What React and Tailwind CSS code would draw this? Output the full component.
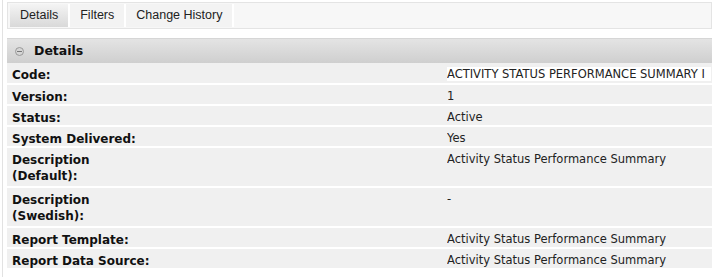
const rows = [
  { label: "Code:", value: "ACTIVITY STATUS PERFORMANCE SUMMARY I", code: true },
  { label: "Version:", value: "1" },
  { label: "Status:", value: "Active" },
  { label: "System Delivered:", value: "Yes" },
  { label: ["Description", "(Default):"], value: "Activity Status Performance Summary" },
  { label: ["Description", "(Swedish):"], value: "-" },
  { label: "Report Template:", value: "Activity Status Performance Summary" },
  { label: "Report Data Source:", value: "Activity Status Performance Summary" },
];

function Tab({ children, active }) {
  return (
    <div
      className={
        "flex items-center px-[10px] h-full border-r-2 border-white text-[12.5px] text-[#222] " +
        (active
          ? "bg-gradient-to-b from-[#f4f4f4] to-[#d9d9d9]"
          : "bg-[#f3f3f3]")
      }
    >
      {children}
    </div>
  );
}

export default function App() {
  return (
    <div className="w-[712px] h-[277px] overflow-hidden bg-white flex">
      <div className="w-[3px] ml-[2px] border-l border-[#e2e2e2] shrink-0" />
      <div className="flex-1 pl-[2px] pt-[2px]">
        {/* tabs */}
        <div
          className="h-[27px] flex bg-[#f7f7f7] border border-[#e4e4e4] pl-[2px] pt-[1px] pb-[1px]"
          style={{ fontFamily: '"Liberation Sans", Arial, sans-serif' }}
        >
          <Tab active>Details</Tab>
          <Tab>Filters</Tab>
          <Tab>Change History</Tab>
        </div>

        <div
          className="mt-[9px]"
          style={{ fontFamily: '"DejaVu Sans", Verdana, sans-serif' }}
        >
          {/* section header */}
          <div className="h-[25px] flex items-center bg-gradient-to-b from-[#e4e4e4] to-[#cfcfcf] border-t border-[#d6d6d6]">
            <span className="ml-[8px] w-[9px] h-[9px] rounded-full border border-[#9a9a9a] bg-[#d6d6d6] flex items-center justify-center">
              <span className="w-[5px] h-px bg-[#777]" />
            </span>
            <span className="ml-[10px] font-bold text-[12.5px] text-[#111]">Details</span>
          </div>

          {rows.map((r, i) => {
            const multi = Array.isArray(r.label);
            return (
              <div
                key={multi ? r.label.join(" ") : r.label}
                className={
                  "flex bg-[#f0f0f0] border-b-2 border-white " +
                  (multi ? "h-[40px]" : i === 0 ? "h-[22px]" : "h-[21px]")
                }
              >
                <div className="w-[440px] pl-[5px] font-bold text-[12px] leading-[16px] text-[#111] pt-[4px]">
                  {multi ? (
                    <>
                      <div>{r.label[0]}</div>
                      <div>{r.label[1]}</div>
                    </>
                  ) : (
                    r.label
                  )}
                </div>
                <div className="flex-1 pt-[4px] text-[11.5px] leading-[15px] text-[#222] whitespace-nowrap overflow-hidden">
                  {r.code ? (
                    <span className="bg-white pr-[6px]">{r.value}</span>
                  ) : (
                    r.value
                  )}
                </div>
              </div>
            );
          })}
        </div>
      </div>
    </div>
  );
}
